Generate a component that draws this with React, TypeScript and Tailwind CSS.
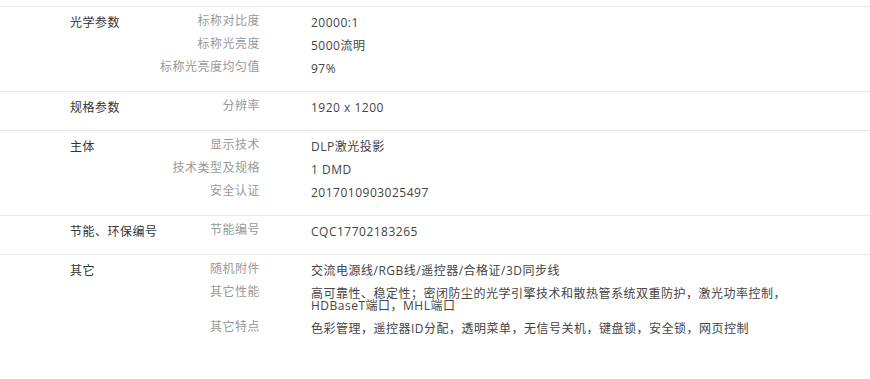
type Row = { label: string; value: string }
type Group = { title: string; rows: Row[] }

const groups: Group[] = [
  {
    title: '光学参数',
    rows: [
      { label: '标称对比度', value: '20000:1' },
      { label: '标称光亮度', value: '5000流明' },
      { label: '标称光亮度均匀值', value: '97%' },
    ],
  },
  {
    title: '规格参数',
    rows: [{ label: '分辨率', value: '1920 x 1200' }],
  },
  {
    title: '主体',
    rows: [
      { label: '显示技术', value: 'DLP激光投影' },
      { label: '技术类型及规格', value: '1 DMD' },
      { label: '安全认证', value: '2017010903025497' },
    ],
  },
  {
    title: '节能、环保编号',
    rows: [{ label: '节能编号', value: 'CQC17702183265' }],
  },
  {
    title: '其它',
    rows: [
      { label: '随机附件', value: '交流电源线/RGB线/遥控器/合格证/3D同步线' },
      {
        label: '其它性能',
        value: '高可靠性、稳定性；密闭防尘的光学引擎技术和散热管系统双重防护，激光功率控制，HDBaseT端口，MHL端口',
      },
      { label: '其它特点', value: '色彩管理，遥控器ID分配，透明菜单，无信号关机，键盘锁，安全锁，网页控制' },
    ],
  },
]

export default function App() {
  return (
    <div className="min-h-[379px] bg-white pt-[6px] font-['Open_Sans','Noto_Sans_CJK_SC',sans-serif] text-[12px] tracking-[0.5px] text-[#444]">
      {groups.map((g, i) => (
        <div
          key={g.title}
          className={`flex border-t border-[#e8e8e8] pl-[70px] pt-[10px] ${i === groups.length - 1 ? 'pb-[40px]' : 'pb-[16px]'}`}
        >
          <div className="w-[90px] shrink-0 whitespace-nowrap leading-[12px] text-[#333]">{g.title}</div>
          <div className="flex flex-col gap-[11px]">
            {g.rows.map((r) => (
              <div key={r.label} className="flex items-start leading-[12px]">
                <div className="-mt-[2px] w-[100px] shrink-0 whitespace-nowrap text-right text-[#999]">{r.label}</div>
                <div className="ml-[51px] w-[500px]">{r.value}</div>
              </div>
            ))}
          </div>
        </div>
      ))}
    </div>
  )
}
